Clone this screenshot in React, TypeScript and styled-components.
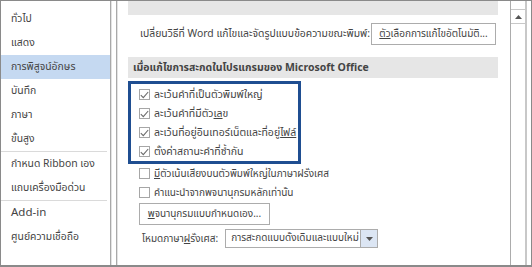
import styled, { createGlobalStyle } from "styled-components";

const GlobalStyle = createGlobalStyle`
  body {
    margin: 0;
    background: #ffffff;
    font-family: "Segoe UI", "Noto Sans Thai", "Noto Sans", "Liberation Sans", sans-serif;
    color: #444444;
  }
`;

const Frame = styled.div`
  width: 532px;
  height: 267px;
  box-sizing: border-box;
  border: 1px solid #8a8a8a;
  border-bottom-width: 2px;
  display: flex;
  overflow: hidden;
  background: #ffffff;
`;

const Nav = styled.div`
  width: 109px;
  flex-shrink: 0;
  padding-top: 6px;
  border-right: 1px solid #a9a9a9;
  box-shadow: 1px 0 0 #e3e3e3;
  display: flex;
  flex-direction: column;
`;

const NavItem = styled.div<{ active?: boolean; latin?: boolean }>`
  height: 24px;
  line-height: 24px;
  padding-left: 10px;
  font-size: ${(p) => (p.latin ? "11.5px" : "10.4px")};
  color: #444444;
  background: ${(p) => (p.active ? "#c5d9f1" : "transparent")};
  white-space: nowrap;
`;

const NavSeparator = styled.div`
  height: 1px;
  margin: 0 3px 0 0;
  background: #dadada;
`;

const Pane = styled.div`
  flex: 1;
  margin-left: 5px;
  border-left: 1px solid #a9a9a9;
  box-shadow: inset 1px 0 0 #e3e3e3;
  display: flex;
`;

const Main = styled.div`
  flex: 1;
  padding: 0 12px 0 11px;
  display: flex;
  flex-direction: column;
`;

const SectionBar = styled.div<{ h: number }>`
  height: ${(p) => p.h}px;
  flex-shrink: 0;
  background: #e6e6e6;
  display: flex;
  align-items: center;
  padding-left: 5px;
  font-size: 10.5px;
  font-weight: 700;
  color: #444444;
  white-space: nowrap;
`;

const AutoRow = styled.div`
  display: flex;
  align-items: center;
  justify-content: space-between;
  margin: 8px 0 12px;
  padding: 0 2px 0 12px;
  height: 22px;
`;

const Label = styled.span<{ size?: number }>`
  font-size: ${(p) => p.size ?? 10}px;
  color: #444444;
  white-space: nowrap;
`;

const Button = styled.div<{ w: number }>`
  width: ${(p) => p.w}px;
  height: 22px;
  flex-shrink: 0;
  box-sizing: border-box;
  border: 1px solid #acacac;
  background: #ffffff;
  font-size: 10px;
  display: flex;
  align-items: center;
  justify-content: center;
  white-space: nowrap;
  color: #444444;
`;

const HighlightBox = styled.div`
  width: 173px;
  box-sizing: border-box;
  border: 3px solid #1f4e91;
  margin-top: 3px;
  padding: 1px 0 0 8px;
  display: flex;
  flex-direction: column;
`;

const CheckRow = styled.div<{ indent?: boolean }>`
  height: 19px;
  display: flex;
  align-items: center;
  gap: 4px;
  padding-left: ${(p) => (p.indent ? 11 : 0)}px;
`;

const Box = styled.span`
  width: 9px;
  height: 9px;
  border: 1px solid #a6a6a6;
  background: #ffffff;
  flex-shrink: 0;
  display: flex;
  align-items: center;
  justify-content: center;
`;

const ButtonRow = styled.div`
  padding: 1px 0 0 11px;
`;

const LangRow = styled.div`
  display: flex;
  align-items: center;
  padding: 4px 0 0 14px;
  gap: 7px;
`;

const Select = styled.div`
  width: 153px;
  height: 19px;
  box-sizing: border-box;
  border: 1px solid #acacac;
  display: flex;
  font-size: 10px;
`;

const SelectText = styled.span`
  flex: 1;
  padding-left: 5px;
  line-height: 17px;
  white-space: nowrap;
  overflow: hidden;
`;

const SelectArrow = styled.span`
  width: 16px;
  border-left: 1px solid #acacac;
  background: #dce6f4;
  display: flex;
  align-items: center;
  justify-content: center;
`;

const ScrollBar = styled.div`
  width: 14px;
  flex-shrink: 0;
  border-left: 1px solid #acacac;
  border-right: 2px solid #c8c8c8;
  margin-right: 4px;
  display: flex;
  flex-direction: column;
  padding-top: 8px;
`;

const ScrollUp = styled.div`
  height: 13px;
  border: 1px solid #c8c8c8;
  border-left: none;
  border-right: none;
  display: flex;
  align-items: center;
  justify-content: center;
`;

const Check = () => (
  <svg width="9" height="8" viewBox="0 0 9 8">
    <path d="M0.8 4.2 L3.3 6.7 L8.2 1" fill="none" stroke="#6a6a6a" strokeWidth="1.1" />
  </svg>
);

const navItems: { text: string; active?: boolean; latin?: boolean; sepAfter?: boolean }[] = [
  { text: "ทั่วไป" },
  { text: "แสดง" },
  { text: "การพิสูจน์อักษร", active: true },
  { text: "บันทึก" },
  { text: "ภาษา" },
  { text: "ขั้นสูง", sepAfter: true },
  { text: "กำหนด Ribbon เอง" },
  { text: "แถบเครื่องมือด่วน", sepAfter: true },
  { text: "Add-in", latin: true },
  { text: "ศูนย์ความเชื่อถือ" },
];

const boxed = [
  <>ละเว้นคำที่เป็นตัวพิมพ์ใหญ่</>,
  <>ละเว้นคำที่มีตัว<u>เล</u>ข</>,
  <>ละเว้นที่อยู่อินเทอร์เน็ตและที่อยู่<u>ไฟล์</u></>,
  <>ตั้งค่าสถานะคำที่ซ้ำกัน</>,
];

export default function App() {
  return (
    <>
      <GlobalStyle />
      <Frame>
        <Nav>
          {navItems.map((n) => (
            <div key={n.text}>
              <NavItem active={n.active} latin={n.latin}>
                {n.text}
              </NavItem>
              {n.sepAfter && <NavSeparator />}
            </div>
          ))}
        </Nav>
        <Pane>
          <Main>
            <SectionBar h={14} />
            <AutoRow>
              <Label size={10.4}>เปลี่ยนวิธีที่ Word แก้ไขและจัดรูปแบบข้อความขณะพิมพ์:</Label>
              <Button w={125}>
                <u>ตัว</u>เลือกการแก้ไขอัตโนมัติ...
              </Button>
            </AutoRow>
            <SectionBar h={21}>เมื่อแก้ไขการสะกดในโปรแกรมของ Microsoft Office</SectionBar>
            <HighlightBox>
              {boxed.map((t, i) => (
                <CheckRow key={i}>
                  <Box>
                    <Check />
                  </Box>
                  <Label size={10.5}>{t}</Label>
                </CheckRow>
              ))}
            </HighlightBox>
            <CheckRow indent>
              <Box />
              <Label>
                <u>มี</u>ตัวเน้นเสียงบนตัวพิมพ์ใหญ่ในภาษาฝรั่งเศส
              </Label>
            </CheckRow>
            <CheckRow indent>
              <Box />
              <Label>คำแนะนำจากพจนานุกรมหลักเท่านั้น</Label>
            </CheckRow>
            <ButtonRow>
              <Button w={131}>
                <u>พ</u>จนานุกรมแบบกำหนดเอง...
              </Button>
            </ButtonRow>
            <LangRow>
              <Label>
                โหมดภาษา<u>ฝ</u>รั่งเศส:
              </Label>
              <Select>
                <SelectText>การสะกดแบบดั้งเดิมและแบบใหม่</SelectText>
                <SelectArrow>
                  <svg width="7" height="4" viewBox="0 0 7 4">
                    <path d="M0 0 H7 L3.5 4 Z" fill="#555555" />
                  </svg>
                </SelectArrow>
              </Select>
            </LangRow>
          </Main>
          <ScrollBar>
            <ScrollUp>
              <svg width="7" height="4" viewBox="0 0 7 4">
                <path d="M0 4 H7 L3.5 0 Z" fill="#555555" />
              </svg>
            </ScrollUp>
          </ScrollBar>
        </Pane>
      </Frame>
    </>
  );
}
